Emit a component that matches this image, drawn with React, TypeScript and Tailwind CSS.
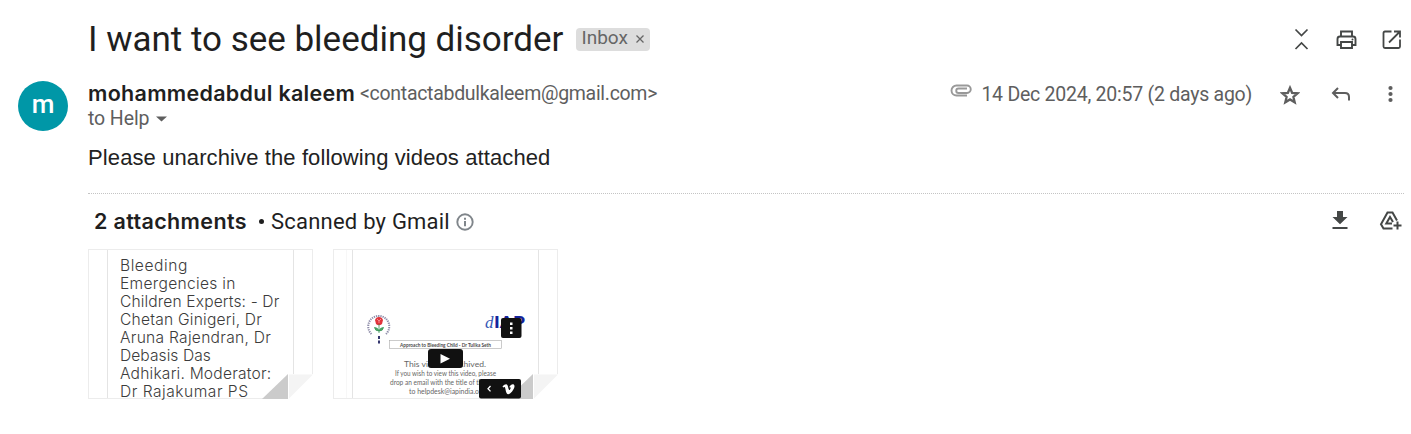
import React from "react";

const FoldShape = () => (
  <>
    <path d="M0 25 26 0V25Z" fill="#cbcbcb" />
    <path d="M26 0H51V25H26Z" fill="#fff" />
    <path d="M27 .5H51L27 24.500Z" fill="#f4f4f4" />
  </>
);

const titleLines: { text: string; cls: string }[] = [
  { text: "Bleeding", cls: "tracking-[0.55px]" },
  { text: "Emergencies in", cls: "tracking-[0.3px]" },
  { text: "Children Experts: - Dr", cls: "tracking-[0.13px]" },
  { text: "Chetan Ginigeri, Dr", cls: "tracking-[0.22px]" },
  { text: "Aruna Rajendran, Dr", cls: "tracking-[0.27px]" },
  { text: "Debasis Das", cls: "tracking-[0.05px]" },
  { text: "Adhikari. Moderator:", cls: "tracking-[0.2px]" },
  { text: "Dr Rajakumar PS", cls: "tracking-[0.5px]" },
];

const TextThumbnail = () => (
  <div className="relative h-[150px] w-[225px] border border-[#ececec] px-[18px]">
    <div className="h-full border-x border-[#e4e4e4] pl-[12px] pt-[7px] font-[Inter,sans-serif] text-[15.600px] font-light leading-[18px] text-[#3c3c3c]">
      {titleLines.map((line) => (
        <div key={line.text} className={`whitespace-nowrap ${line.cls}`}>
          {line.text}
        </div>
      ))}
    </div>
    <svg className="absolute bottom-[-1px] right-[-1px]" width="51" height="25" viewBox="0 0 51 25">
      <FoldShape />
    </svg>
  </div>
);

const VideoThumbnail = () => (
  <div className="h-[150px] w-[225px] bg-white">
    <svg width="225" height="150" viewBox="333 249 225 150" fontFamily="Lato, sans-serif">
      <rect x="333.500" y="249.500" width="224" height="149" fill="none" stroke="#ececec" />
      <path d="M352.500 250V398M538.500 250V398" stroke="#e4e4e4" />
      <path d="M346.500 250V398" stroke="#f7f7f7" />
      <path d="M371.500 334A10.500 10.500 0 1 1 386 334" fill="none" stroke="#8d8ba8" strokeWidth="2" strokeDasharray="1.300 .9" />
      <path d="M375 320q1-3 4-3t4 3l-1 4q-3 2.500-6 0Z" fill="#e0343b" />
      <path d="M377 319l2 2 2-2M379 321v2" fill="none" stroke="#f7a3a3" strokeWidth=".8" />
      <path d="M379 324v9M379 331q-4 0-4.500-3.500 3.500 0 4.500 3.500 1-3.500 4.500-3.500Q383 331 379 331" fill="#4fae6b" stroke="#379455" strokeWidth=".8" />
      <path d="M379 336v3M379 340.500v3" stroke="#34366e" strokeWidth="2" />
      <text x="485" y="328" fontSize="17" fontStyle="italic" fill="#3557b5" fontFamily="Liberation Serif, serif">d</text>
      <text x="494" y="328" fontSize="17" fontWeight="900" fill="#14249b" textLength="31" lengthAdjust="spacingAndGlyphs">IAP</text>
      <rect x="389.500" y="340.500" width="112" height="8" fill="#fff" stroke="#a8a8a8" strokeWidth=".6" />
      <text x="400" y="347" fontSize="5" fontWeight="700" fill="#4a4a4a" textLength="91" lengthAdjust="spacingAndGlyphs">Approach to Bleeding Child - Dr Tulika Seth</text>
      <g fontSize="7" fill="#666">
        <text x="404" y="366.500" textLength="82" lengthAdjust="spacingAndGlyphs">This video is archived.</text>
        <text x="395" y="375.500" textLength="101" lengthAdjust="spacingAndGlyphs">If you wish to view this video, please</text>
        <text x="390" y="384.500" textLength="113" lengthAdjust="spacingAndGlyphs">drop an email with the title of the video</text>
        <text x="409" y="393.500" textLength="76" lengthAdjust="spacingAndGlyphs">to helpdesk@iapindia.org</text>
      </g>
      <g transform="translate(507 374)">
        <FoldShape />
      </g>
      <rect x="501" y="318" width="20.500" height="20" rx="2" fill="#111" />
      <path d="M510 322.500h2.500v2.500H510zM510 327h2.500v2.500H510zM510 331.500h2.500v2.500H510z" fill="#fff" />
      <rect x="428" y="349" width="35" height="19" rx="3" fill="#111" />
      <path d="M440.500 354v9.500l9.500-4.750Z" fill="#fff" />
      <rect x="479" y="379" width="42" height="19.500" rx="2" fill="#111" />
      <path d="M490.500 386l-2.500 2.700 2.500 2.700" fill="none" stroke="#fff" strokeWidth="1.300" />
      <path d="M502.500 386.500c2-2 4-3 5-1.200.8 1.500.8 4.500 1.800 4.700.7.100 1.600-2 1.200-2.500-.4-.5-1-.1-1.300 0 .7-3 5-4.800 5.300-1.500.3 3-4.200 8.300-6.300 8.300-2.600 0-2.300-6-3.500-7.300-.4-.3-1 .3-1.400.5Z" fill="#fff" />
    </svg>
  </div>
);

export default function App() {
  return (
    <main className="h-[434px] w-full overflow-hidden bg-white font-[Roboto,sans-serif] text-[#1f1f1f]">
      <header className="flex h-[78px] items-center pl-[88px]">
        <h1 className="mt-px whitespace-nowrap text-[35px] leading-[44px] tracking-[-0.01px]">I want to see bleeding disorder</h1>
        <div className="ml-[13px] flex h-[23px] w-[74px] items-center rounded-[4px] bg-[#ddd] pl-[5px] text-[19px] leading-[22px] text-[#666]">
          <span className="mb-[2px]">Inbox</span>
          <svg className="ml-[8px]" width="8" height="8" viewBox="0 0 8 8" stroke="#666" strokeWidth="1.300">
            <path d="M.5.5l7 7M7.500.5l-7 7" />
          </svg>
        </div>
        <div className="ml-auto mr-[7px] flex items-center gap-[21px] text-[#444746]">
          <svg width="24" height="24" viewBox="0 0 24 24" fill="none" stroke="currentColor" strokeWidth="1.700">
            <path d="M5.500 2.500l6 6 6-6M5.500 22l6-6 6 6" />
          </svg>
          <svg width="24" height="24" viewBox="0 0 24 24" fill="none" stroke="currentColor" strokeWidth="1.900">
            <path d="M6 9V4.500h11V9M6 18H2.500v-6q0-2.500 2.500-2.500h13q2.500 0 2.500 2.500v6H17" />
            <path d="M6 15h11v6H6z" />
            <circle cx="17.500" cy="12.500" r="1" fill="currentColor" stroke="none" />
          </svg>
          <svg width="24" height="24" viewBox="0 0 24 24" fill="none" stroke="currentColor" strokeWidth="1.800">
            <path d="M11.500 4.500H5q-1.500 0-1.500 1.500v13.500q0 1.500 1.500 1.500h13.500q1.500 0 1.500-1.500v-7M14 4.500h6v6M20 4.500L9 15.500" />
          </svg>
        </div>
      </header>

      <article className="flex pl-[18px] pr-[7px] pt-[3px]">
        <div className="flex h-[50px] w-[50px] shrink-0 items-center justify-center rounded-full bg-[#0097a7] pb-[3px] text-[26px] font-medium text-white">
          m
        </div>
        <div className="ml-[20px] min-w-0 flex-1">
          <div className="flex h-[25px] items-center whitespace-nowrap">
            <span className="w-[267px] font-[Inter,sans-serif] text-[21.500px] font-semibold tracking-[0.3px]">mohammedabdul kaleem</span>
            <span className="ml-[5px] text-[19.500px] tracking-[-0.3px] text-[#5e5e5e]">&lt;contactabdulkaleem@gmail.com&gt;</span>
            <div className="ml-auto flex items-center text-[#5e5e5e]">
              <svg className="mb-[7px] mr-[9px]" width="22" height="13" viewBox="0 0 22 13" fill="none" stroke="#999" strokeWidth="1.900">
                <path d="M17 11.500H6.500a5 5 0 0 1 0-10H17a3.700 3.700 0 0 1 0 7.500H8.500a2.200 2.200 0 0 1 0-4.500H17" />
              </svg>
              <span className="mt-[3px] text-[19.500px] tracking-[-0.25px]">14 Dec 2024, 20:57 (2 days ago)</span>
              <svg className="ml-[28px] mt-[2px]" width="20" height="20" viewBox="0 0 20 20" fill="none" stroke="currentColor" strokeWidth="2.300">
                <path d="M10 2.800l2.100 5 5.500.5-4.200 3.600 1.300 5.400-4.700-2.900-4.700 2.900 1.300-5.400-4.200-3.600 5.500-.5Z" />
              </svg>
              <svg className="ml-[31px]" width="20" height="16" viewBox="0 0 20 16" fill="none" stroke="currentColor" strokeWidth="2">
                <path d="M7 2L2 7l5 5M2.500 7H14q4 0 4 4v3.500" />
              </svg>
              <svg className="ml-[37px] mr-[10px]" width="6" height="18" viewBox="0 0 6 18" fill="currentColor">
                <circle cx="2.500" cy="3" r="2.100" />
                <circle cx="2.500" cy="9" r="2.100" />
                <circle cx="2.500" cy="15" r="2.100" />
              </svg>
            </div>
          </div>
          <div className="flex h-[25px] items-center text-[19.500px] text-[#5e5e5e]">
            <span className="tracking-[-0.1px]">to Help</span>
            <svg className="ml-[7px]" width="11" height="6" viewBox="0 0 11 6">
              <path d="M0 .5H11L5.500 5.500Z" fill="currentColor" />
            </svg>
          </div>
          <p className="mt-[13px] h-[49px] whitespace-nowrap font-['Liberation_Sans',sans-serif] text-[22px] leading-[28px] tracking-[0.11px] text-[#222]">
            Please unarchive the following videos attached
          </p>
          <section className="border-t border-dotted border-[#c4c4c4]">
            <div className="flex h-[55px] items-center whitespace-nowrap pl-[6px] text-[22px]">
              <span className="w-[153px] font-[Inter,sans-serif] text-[21.500px] font-semibold tracking-[0.35px]">2 attachments</span>
              <span className="ml-[12px] h-[5px] w-[5px] rounded-full bg-[#1f1f1f]" />
              <span className="ml-[7px] tracking-[0.22px]">Scanned by Gmail</span>
              <svg className="ml-[6px]" width="18" height="18" viewBox="0 0 18 18" fill="none" stroke="#80868b" strokeWidth="1.900">
                <circle cx="9" cy="9" r="7.700" />
                <path d="M9 8v5.300M9 4.700v2" strokeWidth="2" />
              </svg>
              <div className="ml-auto flex items-center text-[#444746]">
                <svg className="mb-[3px]" width="16" height="20" viewBox="0 0 16 20" fill="currentColor">
                  <path d="M5 1h6v6h4.500L8 14.200.5 7H5zM.5 17h15v2H.5z" />
                </svg>
                <svg className="mb-[2px] ml-[31px] mr-[2px]" width="23" height="21" viewBox="0 0 23 21" fill="none" stroke="currentColor" strokeWidth="2">
                  <path d="M13.500 18.500H4.500L2 14.200 8.500 2.500h5l4.500 8" />
                  <path d="M13 13.500H7.300L11 7l3 5" />
                  <path d="M18.500 11.500v8M14.500 15.500h8" />
                </svg>
              </div>
            </div>
            <div className="flex gap-[20px]">
              <TextThumbnail />
              <VideoThumbnail />
            </div>
          </section>
        </div>
      </article>
    </main>
  );
}
